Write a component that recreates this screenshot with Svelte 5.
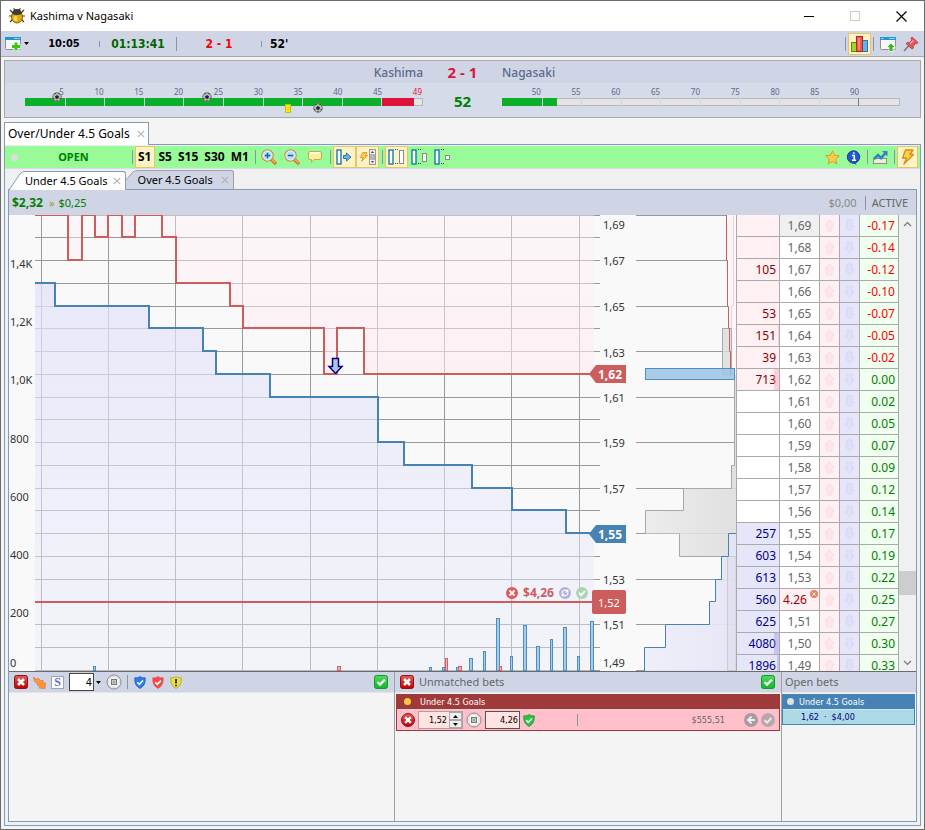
<script lang="ts">
  type Side = 'lay' | 'back' | 'none';
  type Row = { price: string; vol: string; side: Side; profit: string; depth?: number; order?: string };
  type Bar = { x: number; w: number; h: number; red?: boolean };

  const rows: Row[] = [
    { price: '1,69', vol: '', side: 'lay', profit: '-0.17' },
    { price: '1,68', vol: '', side: 'lay', profit: '-0.14' },
    { price: '1,67', vol: '105', side: 'lay', profit: '-0.12' },
    { price: '1,66', vol: '', side: 'lay', profit: '-0.10' },
    { price: '1,65', vol: '53', side: 'lay', profit: '-0.07' },
    { price: '1,64', vol: '151', side: 'lay', profit: '-0.05', depth: 1 },
    { price: '1,63', vol: '39', side: 'lay', profit: '-0.02' },
    { price: '1,62', vol: '713', side: 'lay', profit: '0.00', depth: 5 },
    { price: '1,61', vol: '', side: 'none', profit: '0.02' },
    { price: '1,60', vol: '', side: 'none', profit: '0.05' },
    { price: '1,59', vol: '', side: 'none', profit: '0.07' },
    { price: '1,58', vol: '', side: 'none', profit: '0.09' },
    { price: '1,57', vol: '', side: 'none', profit: '0.12' },
    { price: '1,56', vol: '', side: 'none', profit: '0.14' },
    { price: '1,55', vol: '257', side: 'back', profit: '0.17' },
    { price: '1,54', vol: '603', side: 'back', profit: '0.19' },
    { price: '1,53', vol: '613', side: 'back', profit: '0.22' },
    { price: '1,52', vol: '560', side: 'back', profit: '0.25', order: '4.26' },
    { price: '1,51', vol: '625', side: 'back', profit: '0.27' },
    { price: '1,50', vol: '4080', side: 'back', profit: '0.30', depth: 5 },
    { price: '1,49', vol: '1896', side: 'back', profit: '0.33', depth: 2 },
  ];

  // price in ticks (169 = 1,69) to chart y
  const py = (p: number) => Math.floor((169 - p) * 22.75);

  // [x, price] - the line is at this price from x on
  const layLine = [
    [0, 169], [33, 167], [47, 169], [60, 168], [73, 169], [87, 168], [100, 169], [127, 168],
    [141, 166], [195, 165], [208, 164], [289, 162], [302, 164], [329, 162],
  ];
  const backLine = [
    [0, 166], [20, 165], [114, 164], [168, 163], [181, 162], [235, 161], [343, 159],
    [369, 158], [437, 157], [477, 156], [531, 155],
  ];

  function steps(line: number[][], end: number) {
    let d = `M0 ${py(line[0][1])}`;
    for (const [x, p] of line.slice(1)) d += `H${x}V${py(p)}`;
    return d + `H${end}`;
  }

  const layPath = steps(layLine, 559);
  const backPath = steps(backLine, 559);

  const hLines = Array.from({ length: 21 }, (_, i) => py(169 - i));
  const vLines = Array.from({ length: 9 }, (_, i) => Math.floor(6 + i * 67.25));

  const bars: Bar[] = [
    { x: 58, w: 3, h: 4 }, { x: 302, w: 4, h: 4, red: true }, { x: 394, w: 3, h: 3 },
    { x: 407, w: 3, h: 3 }, { x: 410, w: 3, h: 12, red: true }, { x: 421, w: 3, h: 3 },
    { x: 423, w: 4, h: 4, red: true }, { x: 434, w: 4, h: 12 }, { x: 448, w: 3, h: 19 },
    { x: 461, w: 4, h: 52 }, { x: 464, w: 3, h: 4, red: true }, { x: 475, w: 3, h: 14 },
    { x: 488, w: 4, h: 45 }, { x: 501, w: 4, h: 24 }, { x: 515, w: 3, h: 31 },
    { x: 528, w: 4, h: 43 }, { x: 542, w: 3, h: 14 }, { x: 555, w: 4, h: 49 },
  ];

  const volLabels: [string, number][] = [
    ['1,4K', 49], ['1,2K', 107], ['1,0K', 165], ['800', 224], ['600', 282], ['400', 340], ['200', 398], ['0', 448],
  ];
  const priceLabels: [string, number][] = [
    ['1,69', 10], ['1,67', 46], ['1,65', 92], ['1,63', 138], ['1,61', 183],
    ['1,59', 228], ['1,57', 274], ['1,53', 365], ['1,51', 410], ['1,49', 448],
  ];

  const firstHalf = ['5', '10', '15', '20', '25', '30', '35', '40', '45', '49'];
  const secondHalf = ['50', '55', '60', '65', '70', '75', '80', '85', '90', ''];

  let interval = $state('S1');
  let stake = $state('4');
  let betPrice = $state('1,52');
  let betSize = $state('4,26');
</script>

{#snippet ball()}
  <svg width="10" height="10" viewBox="0 0 10 10">
    <circle cx="5" cy="5" r="4.3" fill="#bbb" stroke="#777" />
    <path d="M5 3L7 4.5L6.2 6.8H3.8L3 4.5ZM2 1.5L4 1L3 2.5ZM8 1.5L6 1L7 2.5ZM1 6L2 7.5L2.5 6ZM9 6L8 7.5L7.5 6ZM4 9H6L5 8Z" fill="#222" />
  </svg>
{/snippet}

{#snippet redCross()}
  <svg width="14" height="14" viewBox="0 0 14 14">
    <rect x=".5" y=".5" width="13" height="13" rx="2" fill="url(#gRed)" stroke="#8e1212" />
    <path d="M4 4L10 10M10 4L4 10" stroke="#fff" stroke-width="2.6" />
  </svg>
{/snippet}

{#snippet greenTick()}
  <svg width="14" height="14" viewBox="0 0 14 14">
    <rect x=".5" y=".5" width="13" height="13" rx="2" fill="url(#gGreen)" stroke="#149a28" />
    <path d="M3.5 7L6 9.6L11 4.5" fill="none" stroke="#fff" stroke-width="2.2" />
  </svg>
{/snippet}

{#snippet stopIcon()}
  <svg width="16" height="16" viewBox="0 0 16 16">
    <circle cx="8" cy="8" r="7" fill="#f4f4f4" stroke="#888" />
    <circle cx="8" cy="8" r="5.5" fill="none" stroke="#ddd" />
    <rect x="5.5" y="5.5" width="5" height="5" fill="#c4c4c4" stroke="#777" />
    <path d="M7 7h2v2h-2z" fill="#a5a5a5" />
  </svg>
{/snippet}

{#snippet shield(fill: string, edge: string, warn: boolean)}
  <svg width="12" height="13" viewBox="0 0 12 13">
    <path d="M6 .6C7.6 1.8 9.4 2 11.2 1.8C11.5 6.5 10.5 10 6 12.4C1.5 10 .5 6.5 .8 1.8C2.6 2 4.4 1.8 6 .6Z" {fill} stroke={edge} stroke-width=".8" />
    {#if warn}
      <path d="M6 3V7.5M6 8.7V10.3" stroke="#222" stroke-width="1.7" />
    {:else}
      <path d="M3.2 6.2L5.3 8.3L9 4.5" fill="none" stroke="#fff" stroke-width="1.6" />
    {/if}
  </svg>
{/snippet}

{#snippet magnifier(plus: boolean)}
  <svg width="16" height="16" viewBox="0 0 16 16">
    <path d="M10.5 10.5L14 14" stroke="#d5762a" stroke-width="3.4" stroke-linecap="round" />
    <path d="M11 10.5L14 13.5" stroke="#f7b45c" stroke-width="1.2" stroke-linecap="round" />
    <circle cx="6.5" cy="6.5" r="5.6" fill="#b4dffa" stroke="#c98b4a" stroke-width="1.3" />
    <circle cx="6.5" cy="6.5" r="4.6" fill="none" stroke="#fff" stroke-width=".8" />
    <path d={plus ? 'M3.8 6.5H9.2M6.5 3.8V9.2' : 'M3.8 6.5H9.2'} stroke="#1a5fa8" stroke-width="1.5" />
  </svg>
{/snippet}

{#snippet columns(y: number, height: number)}
  <svg width="16" height="16" viewBox="0 0 16 16">
    <rect x="1" y="1" width="4" height="14" fill="#fff" stroke="#1a78b4" stroke-width="1.4" />
    <rect x="11.5" {y} width="4" {height} fill="#fff" stroke="#8a8a8a" />
    <path d="M7 .5H11M7 14.5H11" stroke="#444" stroke-dasharray="1 1" />
  </svg>
{/snippet}

{#snippet bolt(size: number)}
  <svg width={size} height={size} viewBox="0 0 16 16">
    <path d="M5.5 1H13L9.8 5.5H13.5L4 15L6.5 9H2.5Z" fill="#ffd24a" stroke="#d98a1a" stroke-width="1.3" stroke-linejoin="round" />
  </svg>
{/snippet}

{#snippet closeX()}
  <svg width="8" height="8" viewBox="0 0 8 8"><path d="M.8 .8L7.2 7.2M7.2 .8L.8 7.2" stroke="#b4b4b4" stroke-width="1.2" /></svg>
{/snippet}

{#snippet half(labels: string[], added: boolean)}
  <div class="minutes">
    {#each labels as label, i}
      <span class:added={added && i === 9}>{label}</span>
    {/each}
  </div>
{/snippet}

<div class="window">
  <svg class="defs" aria-hidden="true">
    <defs>
      <linearGradient id="gRed" x2="0" y2="1"><stop stop-color="#e85a5a" /><stop offset="1" stop-color="#b00" /></linearGradient>
      <linearGradient id="gGreen" x2="0" y2="1"><stop stop-color="#4fdc5c" /><stop offset="1" stop-color="#12b52c" /></linearGradient>
      <linearGradient id="gLay" x2="0" y2="1"><stop stop-color="#fff0f4" stop-opacity=".4" /><stop offset="1" stop-color="#ffeaf0" stop-opacity=".6" /></linearGradient>
      <linearGradient id="gBack" x2="0" y2="1"><stop stop-color="#e2e2fa" stop-opacity=".75" /><stop offset="1" stop-color="#eaecf9" stop-opacity=".4" /></linearGradient>
      <linearGradient id="gTraded"><stop stop-color="#eaeaea" /><stop offset="1" stop-color="#dcdcdc" /></linearGradient>
      <linearGradient id="gDepth"><stop stop-color="#eeeefa" /><stop offset="1" stop-color="#e4e4f6" /></linearGradient>
    </defs>
  </svg>

  <header class="titlebar">
    <svg width="16" height="16" viewBox="0 0 16 16">
      <path d="M1 2L4 5M15 2L12 5M0 8H3M16 8H13M1 14L4 11M15 14L12 11M6 2L4.5 .5M10 2L11.5 .5" stroke="#4a3a10" stroke-width="1.2" />
      <ellipse cx="8" cy="9" rx="5.5" ry="6" fill="#e6a70c" stroke="#8a6208" />
      <path d="M3.2 6Q3.5 1 8 1T12.8 6Q8 8 3.2 6Z" fill="#3b3b3b" />
      <ellipse cx="6.5" cy="10.5" rx="2" ry="2.5" fill="#ffd95a" />
    </svg>
    <h1>Kashima v Nagasaki</h1>
    <div class="controls">
      <button aria-label="Minimise"><svg width="11" height="11" viewBox="0 0 11 11"><path d="M0 5.5H10" stroke="#000" /></svg></button>
      <button aria-label="Maximise" disabled><svg width="11" height="11" viewBox="0 0 11 11"><rect x=".5" y=".5" width="9" height="9" fill="none" stroke="#ccc" /></svg></button>
      <button aria-label="Close"><svg width="11" height="11" viewBox="0 0 11 11"><path d="M.5 .5L10.5 10.5M10.5 .5L.5 10.5" stroke="#000" stroke-width="1.2" /></svg></button>
    </div>
  </header>

  <div class="statusbar">
    <button class="add" aria-label="Add window">
      <svg width="17" height="16" viewBox="0 0 17 16">
        <rect x=".5" y="1.5" width="15" height="12" rx="1" fill="#f7f7f7" stroke="#8b9099" />
        <path d="M0 1H16V4H0Z" fill="#1c9ad0" />
        <path d="M9.5 2.5H14.5" stroke="#fff" stroke-dasharray="1 1" />
        <path d="M11 6V15M6.5 10.5H15.5" stroke="#fff" stroke-width="5" />
        <path d="M11 6.5V14.5M7 10.5H15" stroke="#3fc414" stroke-width="3" />
      </svg>
      <svg width="5" height="3" viewBox="0 0 5 3"><path d="M0 0H5L2.5 3Z" /></svg>
    </button>
    <span class="start">10:05</span>
    <i class="tick"></i>
    <span class="clock">01:13:41</span>
    <i class="sep"></i>
    <span class="result">2 - 1</span>
    <i class="tick"></i>
    <span class="minute">52'</span>
    <div class="right">
      <i class="sep"></i>
      <button class="tool on" aria-label="Statistics">
        <svg width="17" height="16" viewBox="0 0 17 16">
          <rect x=".5" y="6.5" width="5" height="9" fill="#a8d322" stroke="#5f8a10" />
          <rect x="11.5" y="4.5" width="5" height="11" fill="#5cb6f0" stroke="#1f78b8" />
          <rect x="5.5" y=".5" width="6" height="15" fill="#f0564a" stroke="#b02a20" />
          <path d="M8 2V14" stroke="#f99a90" stroke-width="1.5" />
        </svg>
      </button>
      <i class="sep"></i>
      <button class="tool" aria-label="Pop out">
        <svg width="16" height="16" viewBox="0 0 16 16">
          <rect x=".5" y="1.5" width="15" height="12" rx="1" fill="#f7f7f7" stroke="#8b9099" />
          <path d="M0 1H16V4H0Z" fill="#1c9ad0" />
          <path d="M9.5 2.5H14.5M1.5 2.5H4" stroke="#fff" stroke-dasharray="1 1" />
          <path d="M11 7L15.5 11.5H13V15.5H9V11.5H6.5Z" fill="#35c016" stroke="#fff" stroke-width=".8" />
        </svg>
      </button>
      <button class="tool" aria-label="Pin">
        <svg width="16" height="16" viewBox="0 0 16 16">
          <path d="M1 15L6.5 9" stroke="#777" stroke-width="1.5" />
          <path d="M9 1L15 6.5L13.5 8L12.5 7.5L10 10.5L10.5 12L9 13L3 7.5L4.5 6.5L6 6.8L9 4L8 2.5Z" fill="#e2565c" stroke="#b8323a" stroke-width=".8" />
          <path d="M7 7.5L10.5 4.5" stroke="#f8b0b0" stroke-width="1.2" />
        </svg>
      </button>
    </div>
  </div>

  <section class="score">
    <div class="teams">
      <span class="home">Kashima</span>
      <strong>2 - 1</strong>
      <span>Nagasaki</span>
    </div>
    <div class="timeline">
      <div class="half">
        {@render half(firstHalf, true)}
        <div class="track">
          <div class="played" style="width: 98%"></div>
          <div class="extra" style="left: 90%; width: 8%"></div>
          {#each Array(9) as _, i}<i style="left: {(i + 1) * 10}%"></i>{/each}
          <span class="event over" style="left: 8%">{@render ball()}</span>
          <span class="event over" style="left: 46%">{@render ball()}</span>
          <span class="event card" style="left: 67%"></span>
          <span class="event under" style="left: 74%">{@render ball()}</span>
        </div>
      </div>
      <strong>52</strong>
      <div class="half">
        {@render half(secondHalf, false)}
        <div class="track">
          <div class="played" style="width: 14%"></div>
          {#each Array(9) as _, i}<i class:full={i === 8} style="left: {(i + 1) * 10}%"></i>{/each}
        </div>
      </div>
    </div>
  </section>

  <div class="markettab">
    <span>Over/Under 4.5 Goals</span>
    <button aria-label="Close market">{@render closeX()}</button>
  </div>

  <main class="market">
    <div class="marketbar">
      <i class="led"></i>
      <strong class="open">OPEN</strong>
      <i class="sep"></i>
      {#each ['S1', 'S5', 'S15', 'S30', 'M1'] as name}
        <button class="interval" class:on={interval === name} onclick={() => (interval = name)}>{name}</button>
      {/each}
      <i class="sep"></i>
      <button class="tool" aria-label="Zoom in">{@render magnifier(true)}</button>
      <button class="tool" aria-label="Zoom out">{@render magnifier(false)}</button>
      <button class="tool" aria-label="Comments">
        <svg width="14" height="14" viewBox="0 0 14 14">
          <path d="M2 1.5H12Q13.5 1.5 13.5 3V8Q13.5 9.5 12 9.5H6L3.5 12.5V9.5H2Q.5 9.5 .5 8V3Q.5 1.5 2 1.5Z" fill="#f8efa0" stroke="#c2ab55" />
          <path d="M2 3H12" stroke="#fffbe0" stroke-width="1.5" />
        </svg>
      </button>
      <i class="sep"></i>
      <button class="tool on" aria-label="Centre ladder">
        <svg width="16" height="16" viewBox="0 0 16 16">
          <rect x="1" y="1" width="4" height="14" fill="#fff" stroke="#1a78b4" stroke-width="1.4" />
          <path d="M7.5 6.5H10.5V4L15 8L10.5 12V9.5H7.500Z" fill="#6db4ea" stroke="#2a72b0" />
        </svg>
      </button>
      <button class="tool on" aria-label="Quick scroll">
        {@render bolt(10)}
        <svg width="7" height="16" viewBox="0 0 7 16">
          <rect x=".5" y=".5" width="6" height="15" fill="#b5b5b5" stroke="#999" />
          <path d="M1 1H6V5H1ZM1 11H6V15H1Z" fill="#eee" />
          <path d="M2 4L3.5 2L5 4ZM2 12L3.5 14L5 12Z" fill="#444" />
        </svg>
      </button>
      <i class="sep"></i>
      <button class="tool on" aria-label="Wide columns">{@render columns(1.5, 13)}</button>
      <button class="tool" aria-label="Medium columns">{@render columns(4.5, 8)}</button>
      <button class="tool" aria-label="Narrow columns">{@render columns(6.5, 4)}</button>
      <div class="right">
        <button class="tool slim" aria-label="Favourite">
          <svg width="15" height="15" viewBox="0 0 15 15"><path d="M7.5 .8L9.5 5.3L14.3 5.8L10.7 9L11.8 13.9L7.5 11.3L3.2 13.9L4.3 9L.7 5.8L5.5 5.3Z" fill="#ffce4a" stroke="#e09a22" /></svg>
        </button>
        <button class="tool slim" aria-label="Information">
          <svg width="15" height="15" viewBox="0 0 15 15">
            <path d="M7.5 .5A6.3 6.3 0 1 1 6 13L10.5 14.8L9.5 12.5" fill="#2458d0" />
            <circle cx="7.5" cy="7" r="6.2" fill="#2458d0" stroke="#173c9c" />
            <path d="M6 5.5H8.3V10M6 10.3H10M7 3H8.6" fill="none" stroke="#fff" stroke-width="1.6" />
          </svg>
        </button>
        <i class="sep"></i>
        <button class="tool slim" aria-label="Chart">
          <svg width="15" height="15" viewBox="0 0 15 15">
            <rect x=".5" y="8.5" width="13" height="5" fill="#f1ecd2" stroke="#8f8f80" />
            <path d="M1 9L5 5L8 8L13 2.5" fill="none" stroke="#2a86c8" stroke-width="2.6" />
            <path d="M9 1H14.5V6.500Z" fill="#2a86c8" />
          </svg>
        </button>
        <i class="sep"></i>
        <button class="tool on slim" aria-label="One click">{@render bolt(16)}</button>
      </div>
    </div>

    <nav class="runners">
      <a class="active" href="#under">
        <svg width="16" height="19" viewBox="0 0 16 19"><path d="M0 19L11 3Q13 .5 16 .5V19Z" fill="#fff" /><path d="M0 19L11 3Q13 .5 16 .5" fill="none" stroke="#7f9db9" /></svg>
        <span>Under 4.5 Goals {@render closeX()}</span>
      </a>
      <a href="#over">
        <svg width="12" height="19" viewBox="0 0 12 19"><path d="M0 10L6 3Q8 .5 12 .5V19H0Z" fill="#cfd5e5" /><path d="M0 10L6 3Q8 .5 12 .5" fill="none" stroke="#a0a0a0" /></svg>
        <span>Over 4.5 Goals {@render closeX()}</span>
      </a>
    </nav>

    <section class="runner">
      <div class="summary">
        <strong>$2,32</strong>
        <span class="arrow">»</span>
        <span class="hedge">$0,25</span>
        <span class="zero">$0,00</span>
        <i class="sep"></i>
        <span class="state">ACTIVE</span>
      </div>

      <div class="book">
        <svg class="volumes" width="26" height="456">
          {#each volLabels as [label, y]}
            <text x="1" {y} dy="4">{label}</text>
          {/each}
        </svg>

        <div class="plot">
          <svg viewBox="0 0 565 456" preserveAspectRatio="none">
            <g stroke="#999" shape-rendering="crispEdges">
              {#each hLines as y}<path d="M0 {y + 0.5}H565" />{/each}
              {#each vLines as x}<path d="M{x + 0.5} 0V456" />{/each}
            </g>
            <path d="{layPath}V0H0Z" fill="url(#gLay)" />
            <path d="{backPath}V456H0Z" fill="url(#gBack)" />
            <g fill="none" stroke-width="2" shape-rendering="crispEdges">
              <path d={layPath} stroke="#cd5c5c" />
              <path d={backPath} stroke="#4682b4" />
              <path d="M0 387H560" stroke="#cd5c5c" />
            </g>
            {#each bars as b}
              <rect
                x={b.x + 0.5} y={455.5 - b.h} width={b.w - 1} height={b.h}
                fill={b.red ? '#f5b0b5' : '#a9cbe8'} stroke={b.red ? '#d9606a' : '#4a90c8'}
              />
            {/each}
            <path d="M297.5 143.5H303.5V151.5H307L300.5 158.5L294 151.5H297.5Z" fill="#b0c4de" stroke="#00008b" stroke-width="1.5" />
          </svg>
          <div class="order">
            <button aria-label="Cancel order">
              <svg width="12" height="12" viewBox="0 0 12 12"><circle cx="6" cy="6" r="6" fill="#e8565a" /><path d="M3.5 3.5L8.5 8.5M8.5 3.5L3.5 8.5" stroke="#fff" stroke-width="2" /></svg>
            </button>
            <strong>$4,26</strong>
            <button aria-label="Refresh order">
              <svg width="12" height="12" viewBox="0 0 12 12"><circle cx="6" cy="6" r="6" fill="#b4b0da" /><path d="M3 6A3 3 0 0 1 8.5 4.5M9 6A3 3 0 0 1 3.5 7.5M8.8 2.5V5H6.5M3.2 9.5V7H5.5" fill="none" stroke="#fff" stroke-width="1.2" /></svg>
            </button>
            <button aria-label="Confirm order">
              <svg width="12" height="12" viewBox="0 0 12 12"><circle cx="6" cy="6" r="6" fill="#add3b4" /><path d="M3 6L5.2 8.2L9 4" fill="none" stroke="#fff" stroke-width="1.8" /></svg>
            </button>
          </div>
        </div>

        <svg class="axis" width="36" height="456">
          {#each priceLabels as [label, y]}
            <text x="3" {y} dy="4">{label}</text>
          {/each}
          <path d="M-11 159L-4 150H26V168H-4Z" fill="#cd5c5c" />
          <text class="tag" x="-2" y="164">1,62</text>
          <path d="M-11 319L-4 310H26V328H-4Z" fill="#4682b4" />
          <text class="tag" x="-2" y="324">1,55</text>
          <rect x="-8" y="375" width="34" height="24" rx="2" fill="#cd5c5c" />
          <text class="mine" x="-2" y="392">1,52</text>
        </svg>

        <svg class="profile" width="100" height="456">
          <g stroke="#999" shape-rendering="crispEdges">
            {#each hLines as y, i}
              {#if i % 2 === 0}<path d="M0 {y + 0.5}H100" />{/if}
            {/each}
          </g>
          <path d="M90 0V45H91V91H92V113H94V136H95V159H100V0Z" fill="#fdf5f6" />
          <path d="M97.5 0V91H95.5V113" fill="none" stroke="#e4d8da" />
          <rect x="86.5" y="113.5" width="9" height="46" fill="#dcdcdc" fill-opacity=".8" stroke="#aaa" />
          <path d="M90.5 0V45.5H91.5V91.5H92.5V113.5H93.5V136.5H94.5V159.5" fill="none" stroke="#cd5c5c" />
          <path d="M98.5 160V250.5H95.5V273.5H47.5V295.5H9.5V318.5H43.5V341.5H100V160Z" fill="url(#gTraded)" fill-opacity=".85" />
          <path d="M98.5 160V250.5H95.5V273.5H47.5V295.5H9.5V318.5M43.5 318.5V341.5H92" fill="none" stroke="#a8a8a8" />
          <path d="M100 318.5H92.5V341.5H85.5V364.5H79.5V386.5H73.5V409.5H29.5V432.5H8.5V456H100Z" fill="url(#gDepth)" fill-opacity=".9" />
          <path d="M91.5 341.5H100V455.500H91.5Z" fill="#dcdcec" fill-opacity=".5" stroke="#ccc" />
          <path d="M100 318.5H92.5V341.5H85.5V364.5H79.5V386.5H73.5V409.5H29.5V432.5H8.5V456" fill="none" stroke="#4682b4" />
          <rect x="9.5" y="153.5" width="89" height="11" fill="#9cc4e4" fill-opacity=".85" stroke="#4a90c8" />
        </svg>

        <div class="ladder">
          <table>
            <colgroup><col class="cvol" /><col class="cprice" /><col class="carrow" /><col class="carrow" /><col class="cprofit" /></colgroup>
            <tbody>
              {#each rows as row, i}
                <tr>
                  <td class="vol {row.side}">
                    {row.vol}
                    {#if row.depth}<span class="depth" style="width: {row.depth}px"></span>{/if}
                  </td>
                  <td class="price" class:first={i === 0} class:ordered={row.order}>
                    {row.order ?? row.price}
                    {#if row.order}
                      <svg class="cancel" width="8" height="8" viewBox="0 0 8 8"><circle cx="4" cy="4" r="4" fill="#f08060" /><path d="M2.5 2.5L5.5 5.5M5.5 2.5L2.5 5.5" stroke="#fff" /></svg>
                    {/if}
                  </td>
                  <td class="up"><svg width="11" height="13" viewBox="0 0 11 13"><path d="M5.5 1L10 6H8V12H3V6H1Z" fill="#ffe6eb" stroke="#fadae0" /></svg></td>
                  <td class="down"><svg width="11" height="13" viewBox="0 0 11 13"><path d="M5.5 12L10 7H8V1H3V7H1Z" fill="#e0e0f8" stroke="#d5d5f2" /></svg></td>
                  <td class="profit" class:loss={row.profit.startsWith('-')}>{row.profit}</td>
                </tr>
              {/each}
            </tbody>
          </table>
        </div>

        <div class="scrollbar">
          <svg width="9" height="6" viewBox="0 0 9 6"><path d="M1 5L4.5 1.5L8 5" fill="none" stroke="#777" stroke-width="1.2" /></svg>
          <i></i>
          <svg width="9" height="6" viewBox="0 0 9 6"><path d="M1 1L4.5 4.5L8 1" fill="none" stroke="#777" stroke-width="1.2" /></svg>
        </div>
      </div>

      <div class="panels">
        <section class="panel">
          <div class="head">
            <button aria-label="Cancel all">{@render redCross()}</button>
            <button aria-label="Green up">
              <svg width="13" height="13" viewBox="0 0 13 13"><path d="M0 1L4 3.5L5 2L8 5L10 4V6.5L12.5 7L12 12.5L6 12L7 10L4 9L5 7.5L2 6Z" fill="#ff9a2e" stroke="#f0705a" stroke-width=".8" /></svg>
            </button>
            <button class="s" aria-label="Stake mode">S</button>
            <div class="combo">
              <input aria-label="Stake" bind:value={stake} />
              <button aria-label="Choose stake"><svg width="5" height="3" viewBox="0 0 5 3"><path d="M0 0H5L2.5 3Z" /></svg></button>
            </div>
            <button aria-label="Stop">{@render stopIcon()}</button>
            <i class="sep"></i>
            <button class="guard" aria-label="Back shield">{@render shield('#2e7be8', '#1a5cc0', false)}</button>
            <button class="guard" aria-label="Lay shield">{@render shield('#f84848', '#e06060', false)}</button>
            <button class="guard" aria-label="Warning">{@render shield('#e8e040', '#a8a020', true)}</button>
            <button class="end" aria-label="Confirm">{@render greenTick()}</button>
          </div>
        </section>

        <section class="panel">
          <div class="head">
            <button aria-label="Cancel all bets">{@render redCross()}</button>
            <h2>Unmatched bets</h2>
            <button class="end" aria-label="Confirm bets">{@render greenTick()}</button>
          </div>
          <div class="bet lay">
            <div class="name"><i></i>Under 4.5 Goals</div>
            <div class="row">
              <button aria-label="Cancel bet">
                <svg width="14" height="14" viewBox="0 0 14 14"><circle cx="7" cy="7" r="6.5" fill="url(#gRed)" stroke="#8e1212" /><path d="M4.2 4.2L9.8 9.8M9.8 4.2L4.2 9.8" stroke="#fff" stroke-width="2.4" /></svg>
              </button>
              <div class="spin">
                <input aria-label="Price" bind:value={betPrice} />
                <div>
                  <button aria-label="Price up"><svg width="5" height="3" viewBox="0 0 5 3"><path d="M0 3H5L2.5 0Z" /></svg></button>
                  <button aria-label="Price down"><svg width="5" height="3" viewBox="0 0 5 3"><path d="M0 0H5L2.5 3Z" /></svg></button>
                </div>
              </div>
              <button aria-label="Stop bet">{@render stopIcon()}</button>
              <input class="size" aria-label="Size" bind:value={betSize} />
              <button aria-label="Shield">{@render shield('#28c440', '#149a28', false)}</button>
              <i class="sep"></i>
              <span class="avail">$555,51</span>
              <button aria-label="Back to queue">
                <svg width="14" height="14" viewBox="0 0 14 14"><circle cx="7" cy="7" r="7" fill="#aa9a9e" /><path d="M11 7H4.5M7.5 3.5L4 7L7.5 10.5" fill="none" stroke="#eee" stroke-width="1.8" /></svg>
              </button>
              <button aria-label="Accept">
                <svg width="14" height="14" viewBox="0 0 14 14"><circle cx="7" cy="7" r="7" fill="#b8a8ac" /><path d="M3.5 7.2L6 9.7L10.5 4.8" fill="none" stroke="#eee" stroke-width="1.8" /></svg>
              </button>
            </div>
          </div>
        </section>

        <section class="panel">
          <div class="head"><h2>Open bets</h2></div>
          <div class="bet back">
            <div class="name"><i></i>Under 4.5 Goals</div>
            <div class="row"><span>1,62</span><span>·</span><span>$4,00</span></div>
          </div>
        </section>
      </div>
    </section>
  </main>
</div>

<style>
  :global(body) {
    margin: 0;
    background: #f4f4f4;
  }

  .window {
    box-sizing: border-box;
    display: flex;
    flex-direction: column;
    min-height: 100vh;
    border: 1px solid #6b6b6b;
    background: #f4f4f4;
    color: #000;
    font: 12px/16px "Noto Sans", "Open Sans", sans-serif;
  }

  .defs {
    position: absolute;
    width: 0;
    height: 0;
  }

  svg {
    display: block;
    flex: none;
  }

  button {
    display: flex;
    align-items: center;
    justify-content: center;
    padding: 0;
    border: 0;
    background: none;
    color: inherit;
    font: inherit;
  }

  h1, h2 {
    margin: 0;
    font-size: 11px;
    font-weight: normal;
  }

  input {
    box-sizing: border-box;
    min-width: 0;
    font: 11px/14px "DejaVu Sans Condensed", sans-serif;
    text-align: right;
  }

  .right {
    display: flex;
    align-items: center;
    margin-left: auto;
  }

  .sep {
    width: 1px;
    height: 14px;
    background: #8a93a8;
  }

  .titlebar {
    display: flex;
    align-items: center;
    height: 30px;
    padding-left: 8px;
    gap: 5px;
    background: #fff;
  }

  .controls {
    display: flex;
    margin-left: auto;
  }

  .controls button {
    width: 46px;
    height: 30px;
  }

  .statusbar {
    display: flex;
    align-items: center;
    height: 25px;
    padding: 0 2px 0 4px;
    background: #cfd5e5;
    border-bottom: 1px solid #a8a8a8;
    font: bold 12px/16px "DejaVu Sans Condensed", sans-serif;
  }

  .add {
    gap: 2px;
    width: 24px;
  }

  .start {
    width: 70px;
    text-align: center;
    font-size: 11px;
  }

  .tick {
    width: 1px;
    height: 6px;
    background: #8a93a8;
  }

  .clock {
    width: 76px;
    text-align: center;
    color: #006400;
  }

  .result {
    width: 84px;
    text-align: center;
    color: #f00;
  }

  .minute {
    padding-left: 8px;
  }

  .statusbar .right .sep {
    margin: 0 2px;
  }

  .tool {
    box-sizing: border-box;
    width: 23px;
    height: 22px;
    border: 1px solid transparent;
  }

  .tool.on {
    background: #fff2c4;
    border-color: #e8c468;
  }

  .tool.slim {
    width: 21px;
  }

  .score {
    margin: 3px 3px 4px;
    border: 1px solid #a8a8a8;
    background: #d6dbe9;
    color: #5a6a8c;
  }

  .teams, .timeline {
    display: grid;
    grid-template-columns: 1fr 79px 1fr;
    padding: 0 20px;
    text-align: center;
  }

  .teams {
    height: 22px;
    line-height: 23px;
    background: #cfd5e5;
  }

  .teams span {
    text-align: left;
    font-weight: 500;
  }

  .teams .home {
    text-align: right;
  }

  .teams strong {
    color: #dc143c;
    font-size: 15px;
  }

  .timeline {
    height: 34px;
  }

  .timeline strong {
    color: #008000;
    font-size: 15px;
    line-height: 36px;
  }

  .minutes {
    display: grid;
    grid-template-columns: repeat(10, 1fr);
    margin-top: 3px;
    text-align: right;
    font-size: 8px;
    line-height: 12px;
  }

  .minutes span {
    padding-right: 1px;
  }

  .minutes .added {
    color: #dc143c;
  }

  .track {
    position: relative;
    box-sizing: border-box;
    height: 8px;
    border: 1px solid #b8b8b8;
    background: #e4e4e4;
  }

  .track > * {
    position: absolute;
    top: -1px;
    height: 8px;
  }

  .track i {
    width: 1px;
    margin-left: -1px;
    background: #cfd5e5;
  }

  .track .full {
    background: #6b7a99;
  }

  .played {
    left: -1px;
    background: #0bb02a;
  }

  .extra {
    background: #dc143c;
  }

  .track .event {
    margin-left: -6px;
  }

  .track .over {
    top: -7px;
  }

  .track .under {
    top: 4px;
  }

  .track .card {
    top: 5px;
    width: 4px;
    height: 7px;
    border: 1px solid #c8b820;
    background: #ffe800;
  }

  .markettab {
    position: relative;
    z-index: 1;
    display: flex;
    align-items: center;
    align-self: flex-start;
    gap: 7px;
    height: 22px;
    margin: 0 0 -1px 3px;
    padding: 0 3px;
    border: 1px solid #7f9db9;
    border-bottom: 0;
    background: #fff;
  }

  .market {
    display: flex;
    flex: 1;
    flex-direction: column;
    margin: 0 3px 3px;
    border: 1px solid #7f9db9;
    background: #f0f0f0;
  }

  .marketbar {
    display: flex;
    align-items: center;
    height: 22px;
    margin-top: 1px;
    padding-right: 2px;
    border-bottom: 1px solid #d6dbe9;
    background: #98fb98;
  }

  .marketbar .sep {
    margin: 0 2px 0 3px;
  }

  .led {
    width: 7px;
    height: 7px;
    margin-left: 6px;
    border-radius: 50%;
    background: #d8e0d8;
  }

  .open {
    width: 111px;
    text-align: center;
    color: #008000;
    font-size: 11px;
  }

  .interval {
    box-sizing: border-box;
    height: 22px;
    padding: 0 2px;
    border: 1px solid transparent;
    font-size: 12px;
    font-weight: bold;
  }

  .interval.on {
    padding: 0 3px 0 2px;
    border-color: #e8c468;
    background: #fff2c4;
  }

  .runners {
    display: flex;
    align-items: flex-end;
    height: 20px;
    margin-left: 4px;
  }

  .runners a {
    display: flex;
    height: 19px;
    color: #000;
    font-size: 11px;
    text-decoration: none;
  }

  .runners span {
    box-sizing: border-box;
    display: flex;
    align-items: center;
    gap: 8px;
    padding-right: 4px;
    border: solid #a0a0a0;
    border-width: 1px 1px 0 0;
    border-radius: 0 3px 0 0;
    background: #cfd5e5;
    line-height: 14px;
  }

  .runners .active {
    position: relative;
    margin-bottom: -1px;
  }

  .runners .active span {
    gap: 5px;
    border-color: #7f9db9;
    background: #fff;
  }

  .runner {
    display: flex;
    flex: 1;
    flex-direction: column;
    margin: 0 3px 3px;
    border: 1px solid #7f9db9;
    background: #f9f9f9;
  }

  .summary {
    display: flex;
    align-items: center;
    gap: 6px;
    height: 25px;
    padding: 0 8px 0 3px;
    background: #cfd5e5;
    color: #008000;
    font-size: 11px;
  }

  .summary strong {
    font-size: 12px;
  }

  .arrow {
    color: #9a9a30;
  }

  .hedge {
    margin-left: -2px;
  }

  .zero {
    margin: 0 2px 0 auto;
    color: #888;
  }

  .state {
    color: #666;
  }

  .book {
    display: flex;
    height: 456px;
  }

  .book text {
    fill: #333;
    font-size: 11px;
  }

  .plot {
    position: relative;
    flex: 1;
    min-width: 0;
  }

  .plot > svg {
    width: 100%;
    height: 456px;
  }

  .order {
    position: absolute;
    top: 370px;
    right: 12px;
    display: flex;
    align-items: center;
    gap: 5px;
    color: #cd5c5c;
  }

  .axis {
    position: relative;
    overflow: visible;
  }

  .book .tag {
    fill: #fff;
    font-size: 12px;
    font-weight: bold;
  }

  .book .mine {
    fill: #fff;
  }

  .ladder {
    width: 163px;
    overflow: hidden;
  }

  table {
    width: 163px;
    table-layout: fixed;
    border-spacing: 0;
    border-left: 1px solid #aaa;
    font-size: 12px;
    line-height: 21px;
  }

  .cvol { width: 43px; }
  .cprice { width: 40px; }
  .carrow { width: 20px; }
  .cprofit { width: 39px; }

  td {
    position: relative;
    box-sizing: border-box;
    height: 22px;
    padding: 0;
    border: solid #aaa;
    border-width: 0 1px 1px 0;
    text-align: right;
  }

  .vol {
    padding-right: 3px;
    background: #fff;
  }

  .vol.lay {
    background: #fff0f4;
    color: #8b0000;
  }

  .vol.back {
    background: #e6e6fa;
    color: #00008b;
  }

  .depth {
    position: absolute;
    top: 0;
    right: 0;
    height: 21px;
    background: #ff9ab8;
    opacity: 0.4;
  }

  .back .depth {
    background: #9090ee;
  }

  .price {
    background: #fff;
    color: #666;
    text-align: center;
  }

  .price.first {
    background: #f0f0f0;
  }

  .price.ordered {
    padding-right: 9px;
    background: #fff0f4;
    color: #a00000;
  }

  .cancel {
    position: absolute;
    top: 1px;
    right: 1px;
  }

  .up svg, .down svg {
    margin: 0 auto;
  }

  .up {
    background: #fff0f4;
  }

  .down {
    background: #e6e6fa;
  }

  .profit {
    padding-right: 3px;
    background: #f0fff0;
    color: #008000;
  }

  .profit.loss {
    color: #f00;
  }

  .scrollbar {
    display: flex;
    flex-direction: column;
    align-items: center;
    box-sizing: border-box;
    width: 17px;
    padding: 6px 0 5px;
    background: #f0f0f0;
  }

  .scrollbar i {
    width: 17px;
    height: 24px;
    margin: auto 0 65px;
    background: #cdcdcd;
  }

  .panels {
    display: grid;
    flex: 1;
    grid-template-columns: 385px 1fr 135px;
    border-top: 1px solid #6b6b6b;
    background: #f4f4f4;
  }

  .panel + .panel {
    border-left: 1px solid #a0a0a0;
  }

  .head {
    display: flex;
    align-items: center;
    gap: 5px;
    height: 20px;
    padding: 0 6px 0 5px;
    background: #cfd5e5;
    border-bottom: 1px solid #e2e5ee;
  }

  h2 {
    color: #666;
  }

  .panel:last-child .head {
    padding-left: 3px;
  }

  .end {
    margin-left: auto;
  }

  .guard {
    margin-left: 1px;
  }

  .s {
    box-sizing: border-box;
    width: 13px;
    height: 13px;
    border: 1px solid #9aa4c0;
    background: #fff;
    color: #5a6ae0;
    font: bold 12px/12px "Liberation Serif", serif;
  }

  .combo {
    display: flex;
    gap: 2px;
  }

  .combo input {
    width: 25px;
    height: 18px;
    padding: 0 1px;
    border: 1px solid #444;
  }

  .bet {
    margin: 1px 1px 0;
    font: 9px/14px "DejaVu Sans Condensed", sans-serif;
  }

  .name {
    display: flex;
    align-items: center;
    gap: 9px;
    height: 15px;
    padding-left: 7px;
    color: #fff;
  }

  .name i {
    width: 7px;
    height: 7px;
    border-radius: 50%;
    background: #ffc840;
  }

  .bet .row {
    display: flex;
    align-items: center;
  }

  .lay.bet {
    border: 1px solid #a03a3a;
    border-width: 0 1px 1px;
    background: #a03a3a;
  }

  .lay .row {
    box-sizing: border-box;
    height: 21px;
    gap: 3px;
    padding: 0 4px;
    border-top: 1px solid #e8d0d4;
    background: #ffc0cb;
  }

  .spin {
    display: flex;
    box-sizing: border-box;
    width: 45px;
    height: 18px;
    border: 1px solid #b0a0a4;
    background: #ffe4e1;
  }

  .spin input {
    flex: 1;
    border: 0;
    padding: 0 2px;
    background: none;
    font-size: 9px;
  }

  .spin div {
    display: flex;
    flex-direction: column;
    width: 13px;
  }

  .spin button {
    flex: 1;
    border: 1px solid #aaa;
    background: #f0f0f0;
  }

  .size {
    width: 35px;
    height: 18px;
    padding: 0 1px;
    border: 1px solid #555;
    background: #ffe4e1;
    font-size: 9px;
  }

  .lay .row .sep {
    height: 12px;
    margin-left: 39px;
  }

  .avail {
    margin: 0 16px 0 auto;
    color: #666;
  }

  .back.bet {
    margin-left: 0;
    border: 1px solid #4682b4;
    border-top: 0;
    background: #4682b4;
  }

  .back .name i {
    background: #e0e0e0;
  }

  .back .name {
    gap: 5px;
    padding-left: 4px;
  }

  .back .row {
    gap: 5px;
    height: 14px;
    padding-left: 18px;
    border-top: 1px solid #d0e8f0;
    background: #add8e6;
    color: #00008b;
  }
</style>
